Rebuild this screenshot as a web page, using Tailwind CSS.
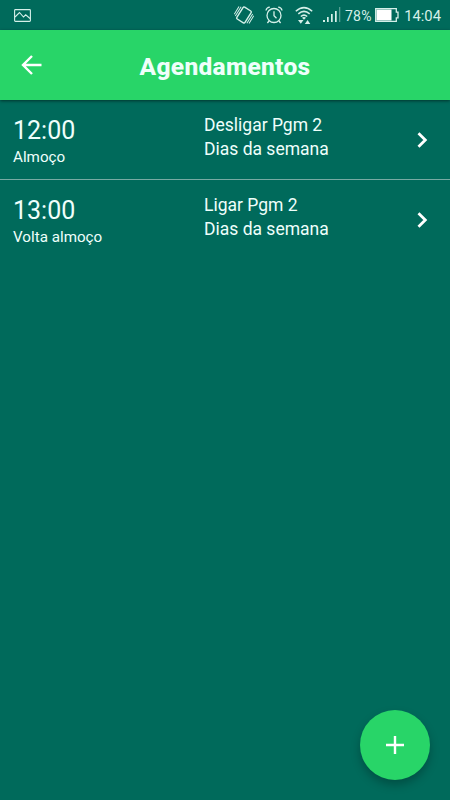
<!DOCTYPE html>
<html lang="pt-BR">
<head>
  <meta charset="UTF-8" />
  <meta name="viewport" content="width=device-width, initial-scale=1.0" />
  <title>Agendamentos</title>
  <script src="https://cdn.jsdelivr.net/npm/@tailwindcss/browser@4"></script>
</head>
<body class="bg-[#006a5b] text-[#effffb] font-[Roboto,sans-serif]">
  <div class="relative flex flex-col w-[450px] h-[800px] overflow-hidden">
    <!-- Status bar -->
    <div class="flex items-center h-[30px] shrink-0 pl-[14px] pr-[9px] text-[#d5f0e9]">
      <svg class="w-[17px] h-[13px]" viewBox="0 0 17 13" fill="none" stroke="currentColor" stroke-width="1.1">
        <rect x=".6" y=".6" width="15.8" height="11.8" rx=".8" />
        <path d="M1 8l4.500-4.500L9.500 8l2.200-2.200L16 9.500" />
      </svg>
      <svg class="w-[20px] h-[20px] ml-[203px]" viewBox="0 0 20 20" fill="none" stroke="currentColor" stroke-width="1">
        <g transform="rotate(32 10 10)">
          <rect x="5.200" y="3" width="9.600" height="14" rx="1.200" stroke-width="1.400" />
          <path d="M3.200 4.500v11M1.300 5.500v9M16.800 4.500v11M18.700 5.500v9" />
        </g>
      </svg>
      <svg class="w-[18px] h-[18px] ml-[11px]" viewBox="0 0 18 18" fill="none" stroke="currentColor" stroke-width="1.3">
        <circle cx="9" cy="9.500" r="7" />
        <path d="M9 5.200v4.500l2.500 2.500M1 4.500Q1.500 1.500 4.800 1.200M17 4.500Q16.500 1.500 13.200 1.200M4 15l-1.600 2M14 15l1.600 2" />
      </svg>
      <svg class="w-[18px] h-[20px] ml-[12px]" viewBox="0 0 18 20" fill="none" stroke="currentColor" stroke-width="1.500">
        <path d="M.8 6.200Q9-1 17.200 6.200M3.300 8.900Q9 3.900 14.700 8.900M5.800 11.500Q9 8.800 12.200 11.500" />
        <path d="M9 14.800l-2-2q2-1.400 4 0zM3 15h5.500L5.800 18.800zM9.800 19h5.500l-2.700-4z" fill="currentColor" stroke="none" />
      </svg>
      <svg class="w-[18px] h-[16px] ml-[10px]" viewBox="0 0 18 16" fill="currentColor">
        <rect x="0" y="13" width="2" height="2" />
        <rect x="4" y="10" width="1.700" height="5" />
        <rect x="8" y="7" width="1.700" height="8" />
        <rect x="12" y="4" width="1.700" height="11" />
        <rect x="16" y="0" width="1.300" height="15" opacity=".4" />
      </svg>
      <span class="w-[28px] ml-[4px] pt-[2px] text-[14px] tracking-[0.2px] leading-none whitespace-nowrap">78%</span>
      <svg class="w-[24px] h-[14px] ml-[2px] shrink-0" viewBox="0 0 24 14">
        <path d="M.7.700h20.600v3.500h1.700v5.600h-1.700v3.500H.7z" fill="none" stroke="currentColor" stroke-width="1.300" />
        <rect x="1.500" y="1.500" width="15" height="11" fill="white" />
      </svg>
      <span class="ml-auto pt-[2px] text-[14.800px] leading-none">14:04</span>
    </div>

    <!-- Toolbar -->
    <header class="relative flex items-center justify-center h-[70px] shrink-0 bg-[#28d568] shadow-[0_1px_3px_rgba(0,0,0,0.5)]">
      <svg class="absolute left-[21px] top-[25px] w-[21px] h-[20px]" viewBox="0 0 21 20" fill="none" stroke="white" stroke-width="2.400">
        <path d="M20.500 10H2.500M11 1L2 10l9 9" />
      </svg>
      <h1 class="pt-[4px] text-[24.500px] tracking-[0.3px] leading-none font-extrabold">Agendamentos</h1>
    </header>

    <!-- Schedules -->
    <ul>
      <li class="flex h-20 pl-[13px] pr-[22px] border-b border-[#78aaa3]">
        <div class="w-[191px] pt-[16px]">
          <div class="text-[25px] leading-[30px]">12:00</div>
          <div class="text-[15.200px] leading-[22px]">Almoço</div>
        </div>
        <div class="flex-1 pt-[13px] text-[17.500px] leading-6">
          <div>Desligar Pgm 2</div>
          <div>Dias da semana</div>
        </div>
        <svg class="w-[11px] h-[16px] mt-[32px]" viewBox="0 0 11 16" fill="none" stroke="white" stroke-width="2.800">
          <path d="M1.500 1.200L8.300 8l-6.800 6.800" />
        </svg>
      </li>
      <li class="flex h-20 pl-[13px] pr-[22px]">
        <div class="w-[191px] pt-[16px]">
          <div class="text-[25px] leading-[30px]">13:00</div>
          <div class="text-[15.200px] leading-[22px]">Volta almoço</div>
        </div>
        <div class="flex-1 pt-[13px] text-[17.500px] leading-6">
          <div>Ligar Pgm 2</div>
          <div>Dias da semana</div>
        </div>
        <svg class="w-[11px] h-[16px] mt-[32px]" viewBox="0 0 11 16" fill="none" stroke="white" stroke-width="2.800">
          <path d="M1.500 1.200L8.300 8l-6.800 6.800" />
        </svg>
      </li>
    </ul>

    <!-- Add button -->
    <button class="absolute right-5 bottom-5 flex items-center justify-center size-[70px] rounded-full bg-[#28d568] shadow-[0_5px_10px_rgba(0,0,0,0.25)]" aria-label="Adicionar">
      <svg class="size-[18px]" viewBox="0 0 18 18" fill="none" stroke="white" stroke-width="2.400">
        <path d="M9 0v18M0 9h18" />
      </svg>
    </button>
  </div>
</body>
</html>
